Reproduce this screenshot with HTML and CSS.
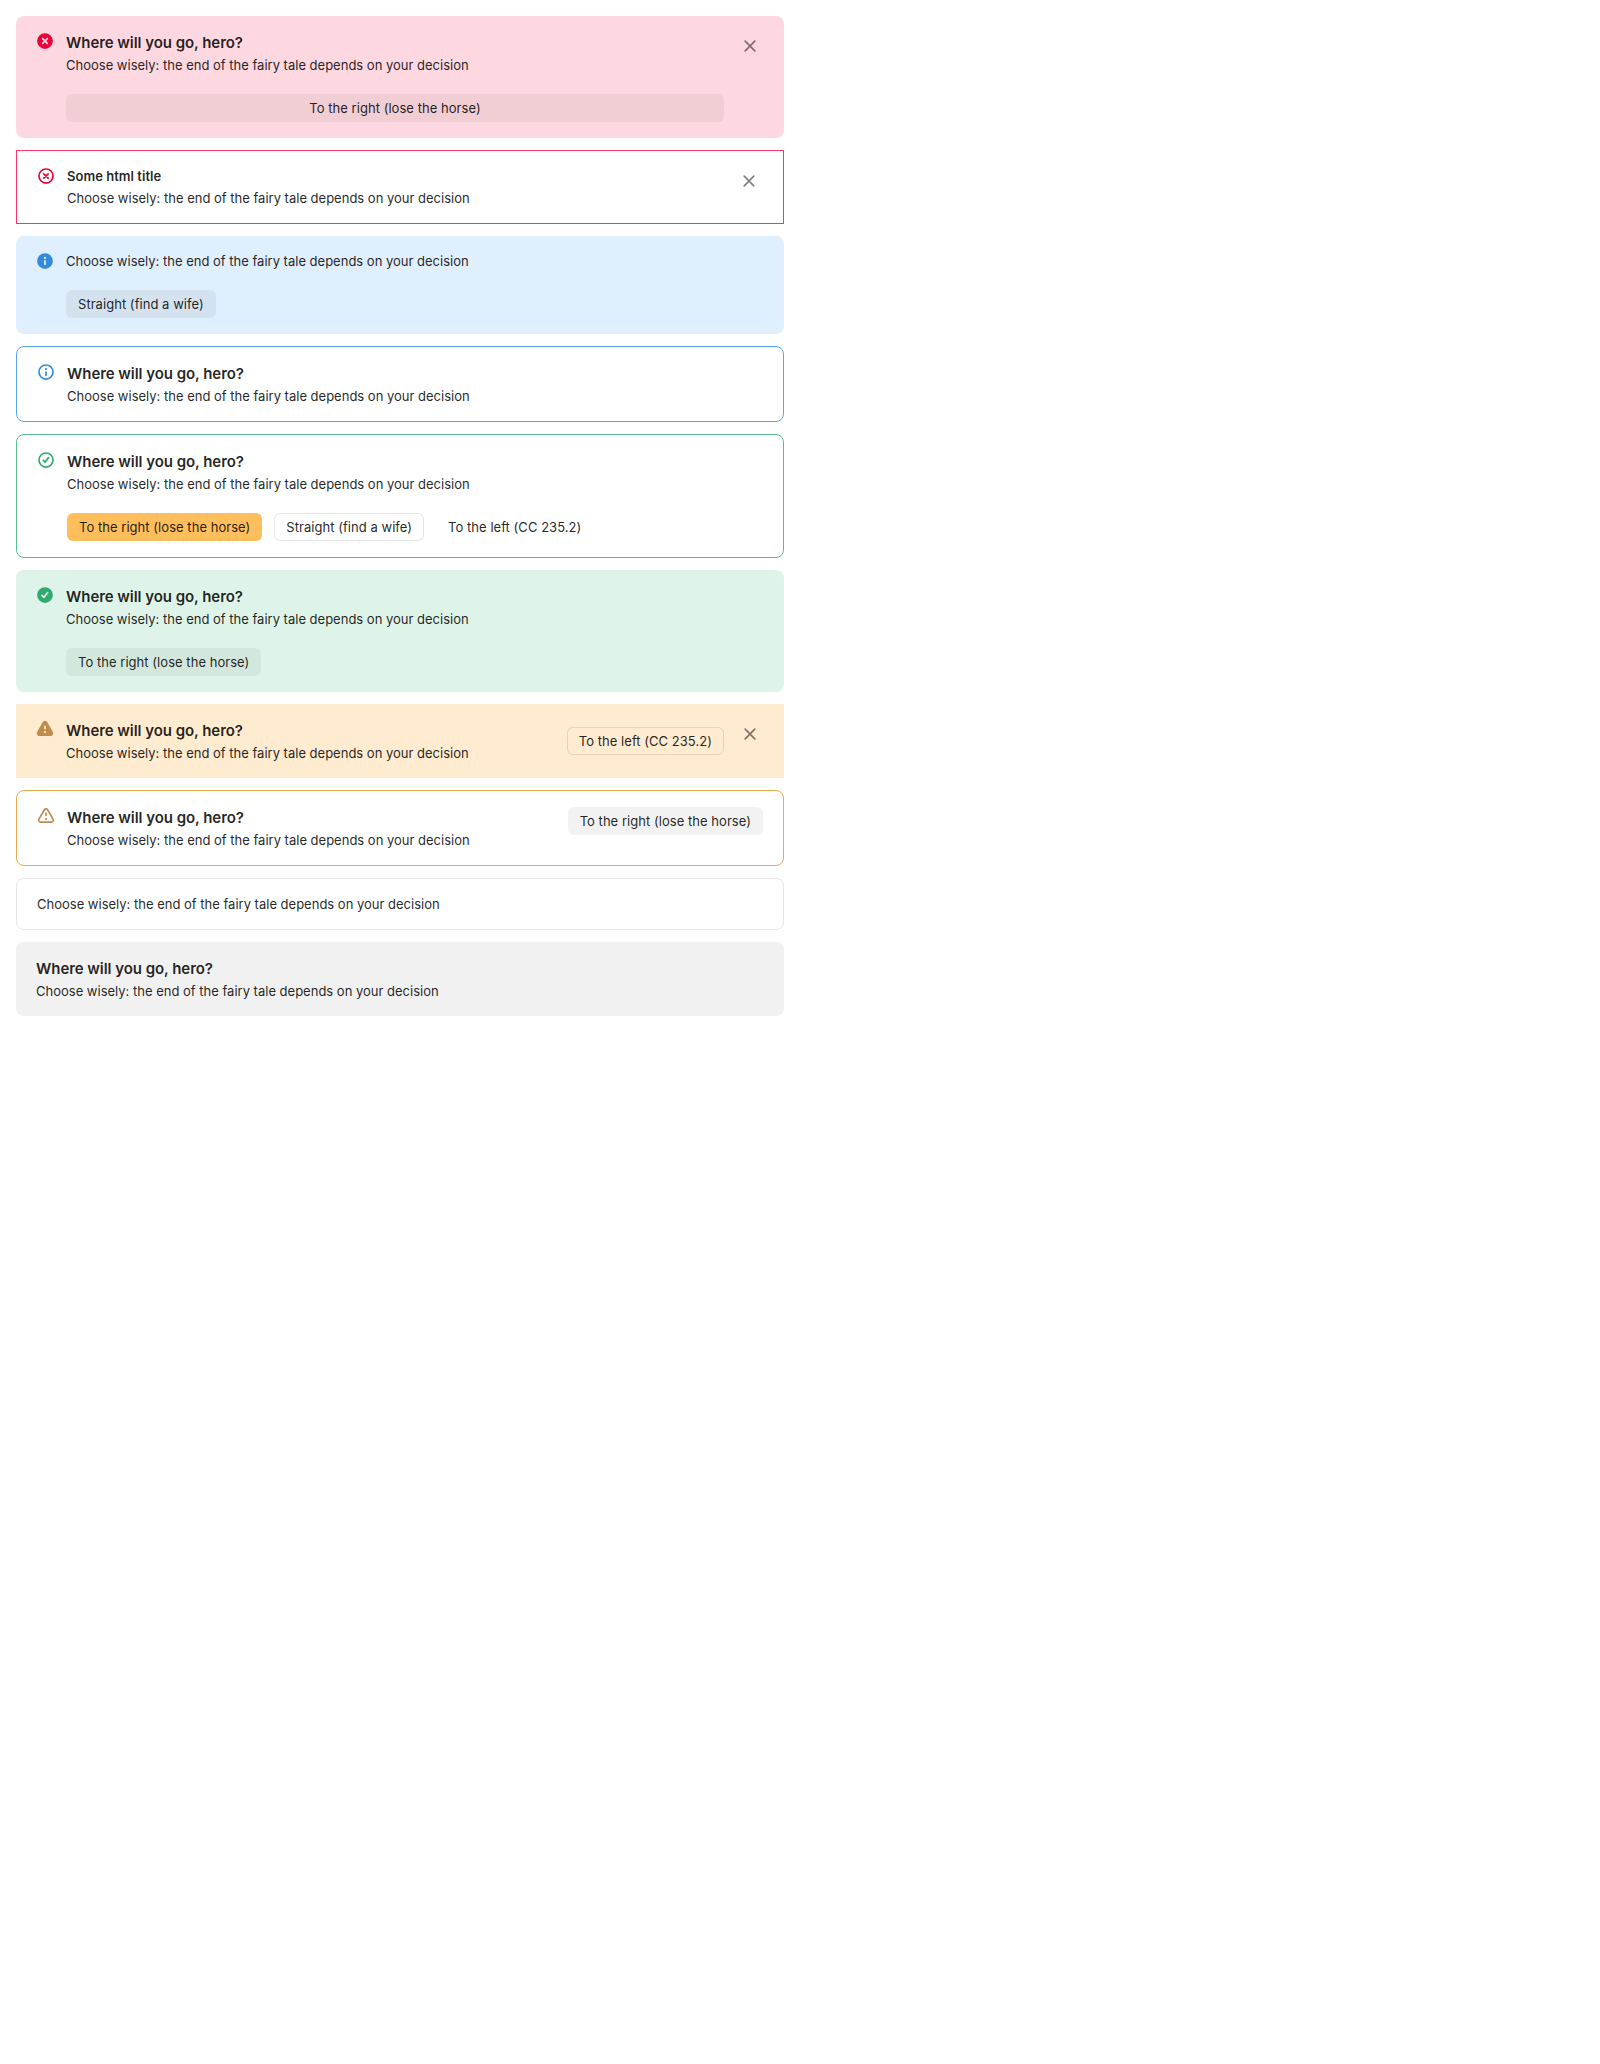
FILE: index.html
```html
<!DOCTYPE html>
<html lang="en">
<head>
<meta charset="utf-8">
<title>Alerts</title>
<link rel="stylesheet" href="styles.css">
</head>
<body>
<svg class="sprite" aria-hidden="true">
  <symbol id="error-fill" viewBox="0 0 16 16"><circle fill="currentColor" cx="8" cy="8" r="7"/><path class="cut" stroke-width="1.5" d="M5.95 5.95l4.1 4.1m0-4.1l-4.1 4.1"/></symbol>
  <symbol id="error" viewBox="0 0 16 16"><circle class="line" cx="8" cy="8" r="6.25"/><path class="line" d="M6.05 6.05l3.9 3.9m0-3.9l-3.9 3.9"/></symbol>
  <symbol id="info-fill" viewBox="0 0 16 16"><circle fill="currentColor" cx="8" cy="8" r="7"/><circle class="cut-fill" cx="8" cy="5.3" r="1"/><path class="cut" stroke-width="1.6" d="M8 7.9v2.9"/></symbol>
  <symbol id="info" viewBox="0 0 16 16"><circle class="line" cx="8" cy="8" r="6.25"/><circle fill="currentColor" cx="8" cy="5.4" r="1"/><path class="line" d="M8 8v2.9"/></symbol>
  <symbol id="success-fill" viewBox="0 0 16 16"><circle fill="currentColor" cx="8" cy="8" r="7"/><path class="cut" stroke-width="1.5" d="M5.35 8.3l1.75 1.75 3.25-4.2"/></symbol>
  <symbol id="success" viewBox="0 0 16 16"><circle class="line" cx="8" cy="8" r="6.25"/><path class="line" d="M5.5 8.2l1.65 1.7 3.1-4"/></symbol>
  <symbol id="warning-fill" viewBox="0 0 16 16"><path fill="currentColor" d="M5.82 2.25c.97-1.67 3.39-1.67 4.36 0l4.78 8.17c.98 1.68-.23 3.83-2.18 3.83H3.22c-1.95 0-3.16-2.15-2.18-3.83z"/><circle class="cut-fill" cx="8" cy="10.7" r="1"/><path class="cut" stroke-width="1.6" d="M8 5.7v1.8"/></symbol>
  <symbol id="warning" viewBox="0 0 16 16"><path class="line" d="M6.47 2.63a1.77 1.77 0 0 1 3.06 0l4.75 8.17c.69 1.18-.16 2.7-1.53 2.7H3.25c-1.37 0-2.22-1.52-1.53-2.7z"/><circle fill="currentColor" cx="8" cy="10.7" r="1"/><path class="line" d="M8 5.7v1.8"/></symbol>
  <symbol id="close" viewBox="0 0 16 16"><path class="line" d="M3.75 3.75l8.5 8.5m0-8.5l-8.5 8.5"/></symbol>
</svg>
<main class="stack">
  <section class="alert danger">
    <svg class="icon"><use href="#error-fill"/></svg>
    <div class="content">
      <div class="text"><h2 class="title">Where will you go, hero?</h2><p>Choose wisely: the end of the fairy tale depends on your decision</p></div>
      <div class="actions"><button class="btn btn-wide">To the right (lose the horse)</button></div>
    </div>
    <button class="close" aria-label="Close"><svg><use href="#close"/></svg></button>
  </section>
  <section class="alert danger outlined square">
    <svg class="icon"><use href="#error"/></svg>
    <div class="content"><div class="text"><strong>Some html title</strong><p>Choose wisely: the end of the fairy tale depends on your decision</p></div></div>
    <button class="close" aria-label="Close"><svg><use href="#close"/></svg></button>
  </section>
  <section class="alert info">
    <svg class="icon"><use href="#info-fill"/></svg>
    <div class="content">
      <div class="text"><p>Choose wisely: the end of the fairy tale depends on your decision</p></div>
      <div class="actions"><button class="btn">Straight (find a wife)</button></div>
    </div>
  </section>
  <section class="alert info outlined">
    <svg class="icon"><use href="#info"/></svg>
    <div class="content"><div class="text"><h2 class="title">Where will you go, hero?</h2><p>Choose wisely: the end of the fairy tale depends on your decision</p></div></div>
  </section>
  <section class="alert success outlined">
    <svg class="icon"><use href="#success"/></svg>
    <div class="content">
      <div class="text"><h2 class="title">Where will you go, hero?</h2><p>Choose wisely: the end of the fairy tale depends on your decision</p></div>
      <div class="actions"><button class="btn btn-action">To the right (lose the horse)</button><button class="btn btn-outlined">Straight (find a wife)</button><button class="btn btn-flat">To the left (CC 235.2)</button></div>
    </div>
  </section>
  <section class="alert success">
    <svg class="icon"><use href="#success-fill"/></svg>
    <div class="content">
      <div class="text"><h2 class="title">Where will you go, hero?</h2><p>Choose wisely: the end of the fairy tale depends on your decision</p></div>
      <div class="actions"><button class="btn">To the right (lose the horse)</button></div>
    </div>
  </section>
  <section class="alert warning square">
    <svg class="icon"><use href="#warning-fill"/></svg>
    <div class="content content-row">
      <div class="text"><h2 class="title">Where will you go, hero?</h2><p>Choose wisely: the end of the fairy tale depends on your decision</p></div>
      <div class="actions centered"><button class="btn btn-outlined">To the left (CC 235.2)</button></div>
    </div>
    <button class="close" aria-label="Close"><svg><use href="#close"/></svg></button>
  </section>
  <section class="alert warning outlined">
    <svg class="icon"><use href="#warning"/></svg>
    <div class="content content-row">
      <div class="text"><h2 class="title">Where will you go, hero?</h2><p>Choose wisely: the end of the fairy tale depends on your decision</p></div>
      <div class="actions"><button class="btn">To the right (lose the horse)</button></div>
    </div>
  </section>
  <section class="alert normal outlined">
    <div class="content"><div class="text"><p>Choose wisely: the end of the fairy tale depends on your decision</p></div></div>
  </section>
  <section class="alert normal">
    <div class="content"><div class="text"><h2 class="title">Where will you go, hero?</h2><p>Choose wisely: the end of the fairy tale depends on your decision</p></div></div>
  </section>
</main>
</body>
</html>
```
FILE: styles.css
```css
* { box-sizing: border-box; }
body { margin: 0; padding: 16px; background: #fff; color: rgba(0, 0, 0, .87); font: 13px/18px Inter, sans-serif; }
.sprite { display: none; }
.stack { display: flex; flex-direction: column; gap: 12px; width: 768px; }
.alert { --back: #f1f1f1; --line: #e5e5e5; --tone: #262626; display: flex; align-items: flex-start; gap: 12px; padding: 16px 20px; border-radius: 8px; background: var(--back); }
.outlined { background: #fff; border: 1px solid var(--line); }
.square { border-radius: 0; }
.danger { --back: #fed8e0; --line: #f73767; --tone: #e9033a; }
.info { --back: #e0effd; --line: #5aa6ee; --tone: #348bdc; }
.success { --back: #dff4e8; --line: #59be8b; --tone: #30aa6e; }
.warning { --back: #ffebcf; --line: #e9ab4f; --tone: #be8c4b; }
.icon { flex: none; width: 18px; height: 18px; color: var(--tone); }
.line { fill: none; stroke: currentColor; stroke-width: 1.5; stroke-linecap: round; stroke-linejoin: round; }
.cut { fill: none; stroke: var(--back); stroke-linecap: round; stroke-linejoin: round; }
.cut-fill { fill: var(--back); }
.content { flex: 1; display: flex; flex-direction: column; gap: 20px; }
.content-row { flex-direction: row; justify-content: space-between; }
.text { display: flex; flex-direction: column; gap: 4px; }
.text p { margin: 0; }
.text strong { font-weight: 600; letter-spacing: .04px; }
.title { margin: 0 0 -2px; font-size: 15px; line-height: 22px; font-weight: 600; letter-spacing: -.05px; }
.actions { display: flex; align-items: flex-start; gap: 12px; }
.centered { align-items: center; }
.btn { height: 28px; padding: 0 12px; border: 0; border-radius: 6px; background: rgba(0, 0, 0, .05); color: inherit; font: 13px/28px Inter, sans-serif; letter-spacing: .04px; white-space: nowrap; }
.btn-wide { flex: 1; }
.btn-action { background: #ffbe5c; }
.btn-outlined { background: none; box-shadow: inset 0 0 0 1px rgba(0, 0, 0, .1); }
.btn-flat { background: none; }
.close { display: flex; align-items: center; justify-content: center; width: 28px; height: 28px; padding: 0; border: 0; background: none; color: rgba(0, 0, 0, .5); }
.close svg { width: 18px; height: 18px; }
```
